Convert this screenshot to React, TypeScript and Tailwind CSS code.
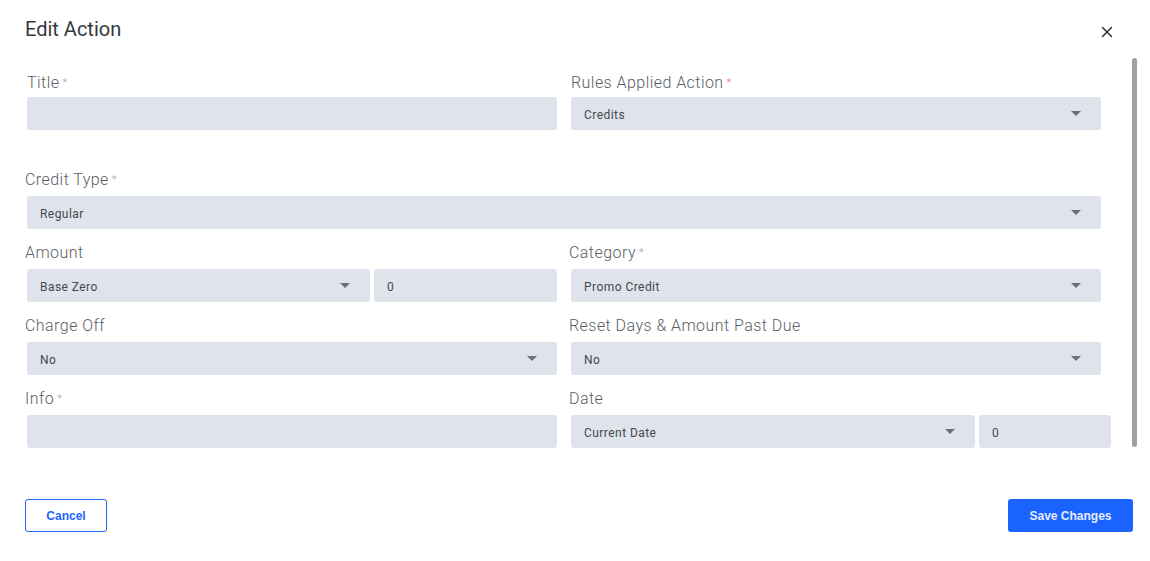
import { X } from "lucide-react";

const Caret = () => (
    <svg width="10" height="5" viewBox="0 0 10 5" className="shrink-0">
        <path d="M0 0 L10 0 L5 5 Z" fill="#6b6f76" />
    </svg>
);

function Label({ text, required, red, className = "" }: { text: string; required?: boolean; red?: boolean; className?: string }) {
    return (
        <div className={`h-5 text-base leading-[22px] font-light tracking-[0.45px] text-[#5a5e64] ${className}`}>
            {text}
            {required && <span className={`ml-[3px] text-[11px] align-top ${red ? "text-[#f0705f]" : "text-[#a3a7ad]"}`}>*</span>}
        </div>
    );
}

function Field({ value, select, className = "" }: { value?: string; select?: boolean; className?: string }) {
    return (
        <div className={`h-[33px] rounded-[3px] bg-[#dfe3eb] flex items-center justify-between pl-[13px] pr-[20px] text-xs tracking-[0.45px] text-[#45484e] ${className}`}>
            <span className="pt-[2px]">{value}</span>
            {select && <Caret />}
        </div>
    );
}

export default function App() {
    return (
        <div className="w-[1150px] h-[561px] bg-white overflow-hidden" style={{ fontFamily: "Roboto, 'Liberation Sans', sans-serif" }}>
            <div className="flex items-start justify-between pl-[25px] pr-[34px] pt-[15px]">
                <h1 className="text-xl leading-7 text-[#343a40]">Edit Action</h1>
                <X className="size-[18px] mt-[8px] text-[#2f3338]" strokeWidth={2} />
            </div>

            <div className="flex mt-[15px]">
                <div className="w-[1111px] pl-[25px]">
                    {/* Row 1 */}
                    <div className="flex gap-[12px] pt-[14px]">
                        <div className="w-[532px] pl-[2px]">
                            <Label text="Title" required className="mb-[5px]" />
                            <Field />
                        </div>
                        <div className="w-[532px] pl-[2px]">
                            <Label text="Rules Applied Action" required red className="mb-[5px]" />
                            <Field value="Credits" select />
                        </div>
                    </div>

                    {/* Credit Type */}
                    <div className="mt-[39px]">
                        <Label text="Credit Type" required className="mb-[7px]" />
                        <Field value="Regular" select className="ml-[2px] w-[1074px]" />
                    </div>

                    {/* Amount / Category */}
                    <div className="flex gap-[12px] mt-[13px]">
                        <div className="w-[532px]">
                            <Label text="Amount" className="mb-[7px]" />
                            <div className="flex gap-[4px] pl-[2px]">
                                <Field value="Base Zero" select className="w-[343px]" />
                                <Field value="0" className="w-[183px]" />
                            </div>
                        </div>
                        <div className="w-[532px]">
                            <Label text="Category" required className="mb-[7px]" />
                            <Field value="Promo Credit" select className="ml-[2px] w-[530px]" />
                        </div>
                    </div>

                    {/* Charge Off / Reset */}
                    <div className="flex gap-[12px] mt-[13px]">
                        <div className="w-[532px]">
                            <Label text="Charge Off" className="mb-[7px]" />
                            <Field value="No" select className="ml-[2px]" />
                        </div>
                        <div className="w-[532px]">
                            <Label text="Reset Days & Amount Past Due" className="mb-[7px]" />
                            <Field value="No" select className="ml-[2px] w-[530px]" />
                        </div>
                    </div>

                    {/* Info / Date */}
                    <div className="flex gap-[12px] mt-[13px]">
                        <div className="w-[532px]">
                            <Label text="Info" required className="mb-[7px]" />
                            <Field className="ml-[2px]" />
                        </div>
                        <div className="w-[542px]">
                            <Label text="Date" className="mb-[7px]" />
                            <div className="flex gap-[4px] pl-[2px]">
                                <Field value="Current Date" select className="w-[404px]" />
                                <Field value="0" className="w-[132px]" />
                            </div>
                        </div>
                    </div>
                </div>
                <div className="ml-[21px] w-[5px] h-[389px] rounded-full bg-[#a1a1a1]" />
            </div>

            <div className="flex items-center justify-between pl-[25px] pr-[17px] mt-[51px]" style={{ fontFamily: "'Liberation Sans', Arial, sans-serif" }}>
                <button className="w-[82px] h-[33px] rounded-[3px] border border-[#1f66ff] text-xs font-bold text-[#1f66ff]">
                    Cancel
                </button>
                <button className="w-[125px] h-[33px] rounded-[3px] bg-[#1a63ff] text-xs font-bold text-[#e6ecff]">
                    Save Changes
                </button>
            </div>
        </div>
    );
}
